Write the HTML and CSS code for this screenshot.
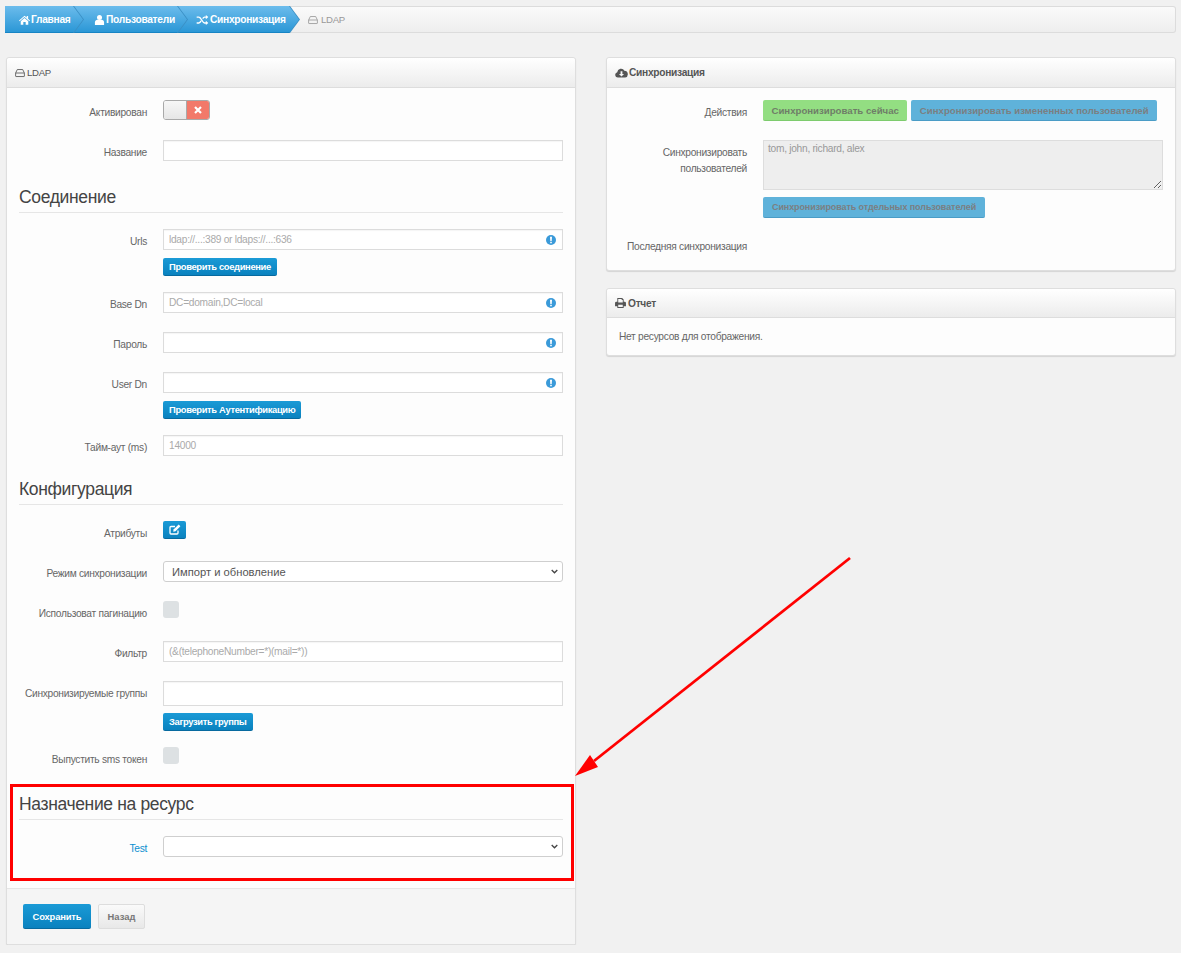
FILE: index.html
```html
<!DOCTYPE html>
<html lang="ru">
<head>
    <meta charset="UTF-8">
    <title>LDAP</title>
    <link rel="stylesheet" href="styles.css">
</head>
<body>
    <nav class="breadcrumb">
        <a class="crumb crumb-1" href="#">
            <svg class="icon" viewBox="0 0 14 12"><path d="M7 0.5 0 6.600l.8.9L7 2.200l6.200 5.300.8-.9-2.400-2.100V1h-1.800v1.900zM2.200 7.700V12h3.300V8.600h3V12h3.300V7.700L7 3.600z"/></svg>
            Главная
        </a>
        <a class="crumb crumb-2" href="#">
            <svg class="icon" viewBox="0 0 12 12"><circle cx="6" cy="3" r="3"/><path d="M0.5 12V9c0-2 1.500-3.300 3-3.300h5c1.500 0 3 1.300 3 3.300v3z"/></svg>
            Пользователи
        </a>
        <a class="crumb crumb-3" href="#">
            <svg class="icon icon-wide" viewBox="0 0 14 12"><path d="M0 2.500h2.600c2.900 0 4 7 6.900 7h2M0 9.500h2.600c1.200 0 2-1.200 2.700-2.600M7.200 4.300C8 3.200 8.600 2.500 9.500 2.500h2" fill="none" stroke="#fff" stroke-width="1.700"/><path d="M11 0l3 2.500-3 2.500zM11 7l3 2.500-3 2.500z"/></svg>
            Синхронизация
        </a>
        <span class="crumb-current">
            <svg class="icon icon-hdd" viewBox="0 0 13 11"><path d="M3 1h7l2.200 4.500V9.500a.6.600 0 0 1-.6.600H1.400a.6.600 0 0 1-.6-.6V5.500zM1 5.500h11" fill="none" stroke="currentColor" stroke-width="1.100"/></svg>
            LDAP
        </span>
    </nav>

    <div class="columns">
        <section class="panel panel-ldap">
            <header class="panel-heading panel-heading-light">
                <svg class="icon icon-hdd" viewBox="0 0 13 11"><path d="M3 1h7l2.200 4.500V9.500a.6.600 0 0 1-.6.600H1.400a.6.600 0 0 1-.6-.6V5.500zM1 5.500h11" fill="none" stroke="currentColor" stroke-width="1.100"/></svg>
                LDAP
            </header>
            <div class="panel-body panel-body-form">
                <div class="row">
                    <label class="row-label">Активирован</label>
                    <div class="row-control">
                        <div class="toggle">
                            <span class="toggle-off"></span>
                            <span class="toggle-x">
                                <svg viewBox="0 0 8 8"><path d="M1 1l6 6M7 1L1 7" stroke="#fff" stroke-width="2.200" fill="none"/></svg>
                            </span>
                        </div>
                    </div>
                </div>
                <div class="row">
                    <label class="row-label">Название</label>
                    <div class="row-control"><input class="input" type="text"></div>
                </div>

                <h3 class="section-title">Соединение</h3>
                <div class="row">
                    <label class="row-label">Urls</label>
                    <div class="row-control">
                        <div class="input-wrap">
                            <input class="input" type="text" placeholder="ldap://...:389 or ldaps://...:636">
                            <svg class="info" viewBox="0 0 10 10"><circle cx="5" cy="5" r="5"/><path d="M4 1.800h2L5.700 6H4.300zM4.200 6.800h1.600v1.500H4.200z" fill="#fff"/></svg>
                        </div>
                        <button class="btn btn-small">Проверить соединение</button>
                    </div>
                </div>
                <div class="row">
                    <label class="row-label">Base Dn</label>
                    <div class="row-control">
                        <div class="input-wrap">
                            <input class="input" type="text" placeholder="DC=domain,DC=local">
                            <svg class="info" viewBox="0 0 10 10"><circle cx="5" cy="5" r="5"/><path d="M4 1.800h2L5.700 6H4.300zM4.200 6.800h1.600v1.500H4.200z" fill="#fff"/></svg>
                        </div>
                    </div>
                </div>
                <div class="row">
                    <label class="row-label">Пароль</label>
                    <div class="row-control">
                        <div class="input-wrap">
                            <input class="input" type="text">
                            <svg class="info" viewBox="0 0 10 10"><circle cx="5" cy="5" r="5"/><path d="M4 1.800h2L5.700 6H4.300zM4.200 6.800h1.600v1.500H4.200z" fill="#fff"/></svg>
                        </div>
                    </div>
                </div>
                <div class="row">
                    <label class="row-label">User Dn</label>
                    <div class="row-control">
                        <div class="input-wrap">
                            <input class="input" type="text">
                            <svg class="info" viewBox="0 0 10 10"><circle cx="5" cy="5" r="5"/><path d="M4 1.800h2L5.700 6H4.300zM4.200 6.800h1.600v1.500H4.200z" fill="#fff"/></svg>
                        </div>
                        <button class="btn btn-small">Проверить Аутентификацию</button>
                    </div>
                </div>
                <div class="row row-tight">
                    <label class="row-label">Тайм-аут (ms)</label>
                    <div class="row-control"><input class="input" type="text" placeholder="14000"></div>
                </div>

                <h3 class="section-title">Конфигурация</h3>
                <div class="row">
                    <label class="row-label">Атрибуты</label>
                    <div class="row-control">
                        <button class="btn btn-icon">
                            <svg viewBox="0 0 12 11"><path d="M9 6.500V9a1 1 0 0 1-1 1H2a1 1 0 0 1-1-1V3.500a1 1 0 0 1 1-1h4" fill="none" stroke="#fff" stroke-width="1.300"/><path d="M4.500 5.500 9.700.6l1.700 1.700L6.500 7.200 4.300 7.700z" fill="#fff"/></svg>
                        </button>
                    </div>
                </div>
                <div class="row">
                    <label class="row-label">Режим синхронизации</label>
                    <div class="row-control select-wrap">
                        <select class="select"><option>Импорт и обновление</option></select>
                        <svg class="chevron" viewBox="0 0 8 5"><path d="M.8.8 4 4l3.200-3.200" fill="none" stroke="#444" stroke-width="1.500"/></svg>
                    </div>
                </div>
                <div class="row">
                    <label class="row-label">Использоват пагинацию</label>
                    <div class="row-control"><span class="check"></span></div>
                </div>
                <div class="row">
                    <label class="row-label">Фильтр</label>
                    <div class="row-control"><input class="input" type="text" placeholder="(&amp;(telephoneNumber=*)(mail=*))"></div>
                </div>
                <div class="row">
                    <label class="row-label">Синхронизируемые группы</label>
                    <div class="row-control">
                        <input class="input input-tall" type="text">
                        <button class="btn btn-small btn-groups">Загрузить группы</button>
                    </div>
                </div>
                <div class="row">
                    <label class="row-label">Выпустить sms токен</label>
                    <div class="row-control"><span class="check"></span></div>
                </div>

                <h3 class="section-title">Назначение на ресурс</h3>
                <div class="row">
                    <label class="row-label row-label-link">Test</label>
                    <div class="row-control select-wrap">
                        <select class="select"><option></option></select>
                        <svg class="chevron" viewBox="0 0 8 5"><path d="M.8.8 4 4l3.200-3.200" fill="none" stroke="#444" stroke-width="1.500"/></svg>
                    </div>
                </div>
            </div>
            <footer class="panel-footer">
                <button class="btn btn-save">Сохранить</button>
                <button class="btn btn-back">Назад</button>
            </footer>
        </section>

        <div class="side">
            <section class="panel">
                <header class="panel-heading">
                    <svg class="icon icon-cloud" viewBox="0 0 14 11"><path fill-rule="evenodd" d="M3 10.500a3 3 0 0 1-.7-5.900A4.200 4.200 0 0 1 10.200 3a3.800 3.800 0 0 1 .8 7.500zM6 3.500v3H4.200L7 9.300l2.800-2.800H8v-3z"/></svg>
                    Синхронизация
                </header>
                <div class="panel-body">
                    <div class="row">
                        <label class="row-label">Действия</label>
                        <div class="row-control row-buttons">
                            <button class="btn-off btn-off-green">Синхронизировать сейчас</button>
                            <button class="btn-off">Синхронизировать измененных пользователей</button>
                        </div>
                    </div>
                    <div class="row">
                        <label class="row-label">Синхронизировать пользователей</label>
                        <div class="row-control">
                            <textarea class="textarea" readonly placeholder="tom, john, richard, alex"></textarea>
                            <button class="btn-off btn-off-single">Синхронизировать отдельных пользователей</button>
                        </div>
                    </div>
                    <div class="row">
                        <label class="row-label">Последняя синхронизация</label>
                        <div class="row-control"></div>
                    </div>
                </div>
            </section>
            <section class="panel">
                <header class="panel-heading panel-heading-report">
                    <svg class="icon" viewBox="0 0 12 11"><path fill-rule="evenodd" d="M2.500 0h5.300L9.500 1.700V4h1A1.500 1.500 0 0 1 12 5.500V9H9.500v2h-7V9H0V5.500A1.500 1.500 0 0 1 1.500 4h1zM3.500 1v4h5V2.200H7.300V1zM3.500 7.500V10h5V7.500z"/></svg>
                    Отчет
                </header>
                <div class="panel-body panel-body-report">Нет ресурсов для отображения.</div>
            </section>
        </div>
    </div>

    <!-- annotation from the screenshot -->
    <div class="mark-box"></div>
    <svg class="mark-arrow" viewBox="0 0 300 240">
        <path d="M276 2 20 205" stroke="#f00" stroke-width="2.800" fill="none"/>
        <path d="M1 220 16 199 24 211z" fill="#f00"/>
    </svg>
</body>
</html>
```

FILE: styles.css
```css
* {
    box-sizing: border-box;
}
body {
    font-family: "Liberation Sans", Arial, sans-serif;
    font-size: 10.2px;
    letter-spacing: -0.28px;
    color: #666;
    background-color: #f1f1f1;
    margin: 0;
    padding: 6px 5px 0 6px;
    position: relative;
}
.icon {
    width: 11px;
    height: 10px;
    fill: currentColor;
    flex: none;
}
.icon-wide {
    width: 13px;
}
.icon-hdd {
    width: 10px;
    height: 10px;
}
.icon-cloud {
    width: 13px;
}

/* breadcrumb */
.breadcrumb {
    display: flex;
    align-items: stretch;
    height: 27px;
    margin-left: -1px;
    background: linear-gradient(#fafafa, #eeeeee);
    border: 1px solid #dcdcdc;
    border-left: 0;
    border-radius: 3px;
}
.crumb {
    position: relative;
    isolation: isolate;
    display: flex;
    align-items: center;
    gap: 1px;
    height: 27px;
    margin-top: -1px;
    margin-right: -10px;
    color: #fff;
    font-weight: bold;
    font-size: 10.2px;
    text-decoration: none;
    background: #3a8fc4;
    clip-path: polygon(0 0, calc(100% - 10px) 0, 100% 50%, calc(100% - 10px) 100%, 0 100%);
}
.crumb::before {
    content: "";
    position: absolute;
    z-index: -1;
    inset: 0 1px 0 0;
    background: linear-gradient(#6cbcec, #2b97d6);
    border-bottom: 1px solid #1784c4;
    clip-path: polygon(0 0, calc(100% - 10px) 0, 100% 50%, calc(100% - 10px) 100%, 0 100%);
}
.crumb-1 {
    z-index: 3;
    width: 79px;
    padding-left: 14px;
    border-radius: 3px 0 0 3px;
}
.crumb-2 {
    z-index: 2;
    width: 114px;
    padding-left: 20px;
}
.crumb-3 {
    z-index: 1;
    width: 122px;
    padding-left: 18px;
    margin-right: 0;
}
.crumb-current {
    display: flex;
    align-items: center;
    gap: 3px;
    padding-left: 8px;
    color: #999;
    font-size: 9.6px;
}

/* columns and panels */
.columns {
    display: grid;
    grid-template-columns: 570px 570px;
    gap: 30px;
    margin-top: 24px;
}
.side {
    display: flex;
    flex-direction: column;
    gap: 17px;
    align-items: stretch;
}
.panel {
    background: #fdfdfd;
    border: 1px solid #dedede;
    border-radius: 3px;
    box-shadow: 0 1px 1px rgba(0, 0, 0, 0.12);
}
.panel-heading {
    display: flex;
    align-items: center;
    gap: 1px;
    height: 30px;
    padding: 0 8px;
    font-size: 10.2px;
    font-weight: bold;
    color: #555;
    background: linear-gradient(#ffffff, #ececec);
    border-bottom: 1px solid #dddddd;
    border-radius: 3px 3px 0 0;
}
.panel-heading-light {
    gap: 2px;
    font-weight: normal;
    font-size: 9.6px;
}
.panel-heading-report {
    gap: 2px;
    height: 29px;
}
.panel-body {
    padding: 12px;
}
.panel-body-report {
    padding: 13px 12px 12px;
    line-height: 12px;
}
.panel-footer {
    display: flex;
    gap: 7px;
    padding: 15px 16px;
    background: #f5f5f5;
    border-top: 1px solid #e6e6e6;
}
.section-title {
    height: 33px;
    margin: 0 0 16px;
    font-size: 17.5px;
    letter-spacing: -0.35px;
    font-weight: normal;
    line-height: 34px;
    color: #444;
    border-bottom: 1px solid #e6e6e6;
}

/* form rows */
.row {
    display: grid;
    grid-template-columns: 128px 400px;
    gap: 16px;
    margin-bottom: 16px;
}
.side .row:last-child {
    margin-bottom: 0;
}
.row-tight {
    margin-bottom: 13px;
}
.row-label {
    padding: 5px 0 3px;
    line-height: 16px;
    text-align: right;
    color: #666;
}
.row-label-link {
    color: #0a8fd0;
}
.row-control {
    min-height: 24px;
}
.row-buttons {
    display: flex;
    gap: 4px;
}
.input-wrap,
.select-wrap {
    position: relative;
}
.input {
    display: block;
    width: 400px;
    height: 21px;
    padding: 0 5px 1px;
    font-family: inherit;
    font-size: 10.2px;
    letter-spacing: -0.28px;
    color: #555;
    background: #fff;
    border: 1px solid #dcdcdc;
    box-shadow: inset 0 1px 1px rgba(0, 0, 0, 0.04);
    outline: none;
}
.input::placeholder {
    color: #aaa;
}
.input-tall {
    height: 25px;
}
.info {
    position: absolute;
    top: 6px;
    right: 7px;
    width: 10px;
    height: 10px;
    fill: #3a9ad9;
}
.select {
    display: block;
    width: 400px;
    height: 21px;
    padding: 0 8px;
    font-family: inherit;
    font-size: 11.2px;
    color: #555;
    background-color: #fff;
    border: 1px solid #cfcfcf;
    border-radius: 3px;
    appearance: none;
}
.chevron {
    position: absolute;
    top: 8px;
    right: 5px;
    width: 7px;
    height: 5px;
}
.textarea {
    display: block;
    width: 400px;
    height: 50px;
    padding: 2px 4px;
    font-family: inherit;
    font-size: 10.2px;
    letter-spacing: -0.28px;
    background: #eeeeee;
    border: 1px solid #dddddd;
    outline: none;
}
.textarea::placeholder {
    color: #999;
}
.check {
    display: block;
    width: 16px;
    height: 17px;
    background: #dde1e3;
    border-radius: 3px;
}

/* toggle */
.toggle {
    display: flex;
    width: 47px;
    height: 20px;
    border: 1px solid #a9a9a9;
    border-radius: 3px;
    overflow: hidden;
}
.toggle-off {
    width: 23px;
    background: linear-gradient(#f7f7f7, #e6e6e6);
    border-right: 1px solid #a9a9a9;
}
.toggle-x {
    display: flex;
    flex: 1;
    align-items: center;
    justify-content: center;
    background: #f2796a;
}
.toggle-x svg {
    width: 8px;
    height: 8px;
}

/* buttons */
.btn {
    display: block;
    font-family: inherit;
    font-weight: bold;
    color: #fff;
    background: linear-gradient(#1a9ad6, #0a82bf);
    border: 0;
    border-bottom: 1px solid #076a9f;
    border-radius: 2px;
    padding: 0;
}
.btn-small {
    height: 18px;
    margin-top: 8px;
    padding: 0 6px;
    font-size: 9.4px;
    letter-spacing: -0.35px;
}
.btn-groups {
    margin-top: 7px;
}
.btn-icon {
    display: flex;
    align-items: center;
    justify-content: center;
    width: 23px;
    height: 18px;
}
.btn-icon svg {
    width: 12px;
    height: 11px;
}
.btn-save {
    width: 68px;
    height: 25px;
    font-size: 9.4px;
    letter-spacing: -0.15px;
}
.btn-back {
    width: 47px;
    height: 25px;
    font-size: 9.4px;
    letter-spacing: 0;
    color: #777;
    background: linear-gradient(#fafafa, #e8e8e8);
    border: 1px solid #dddddd;
}
.btn-off {
    height: 21px;
    padding: 0 8.5px;
    font-family: inherit;
    font-size: 9.65px;
    font-weight: bold;
    letter-spacing: 0;
    white-space: nowrap;
    color: #7b7f82;
    background: #5fb2da;
    border: 0;
    border-bottom: 1px solid #4a9cc6;
    border-radius: 2px;
}
.btn-off-green {
    color: #6f7d68;
    background: #93de82;
    border-bottom-color: #7dcb6d;
}
.btn-off-single {
    display: block;
    margin-top: 7px;
    padding: 0 9px;
    font-size: 9px;
    letter-spacing: -0.1px;
}

/* red annotation */
.mark-box {
    position: absolute;
    left: 10px;
    top: 784px;
    width: 564px;
    height: 97px;
    border: 3px solid #f00;
}
.mark-arrow {
    position: absolute;
    left: 574px;
    top: 556px;
    width: 300px;
    height: 240px;
}
```
